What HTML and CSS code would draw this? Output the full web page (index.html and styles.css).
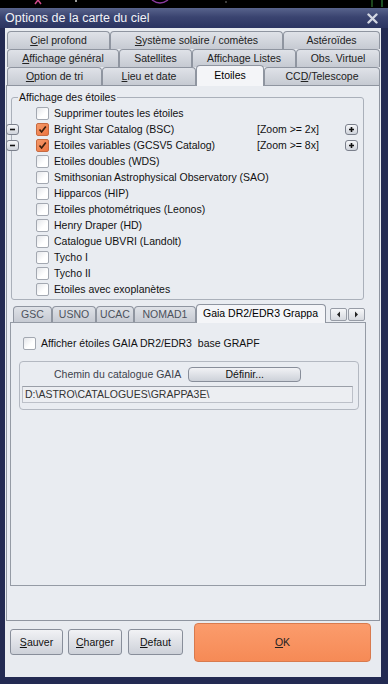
FILE: index.html
```html
<!DOCTYPE html>
<html>
<head>
<meta charset="utf-8">
<title>Options de la carte du ciel</title>
<link rel="stylesheet" href="styles.css">
</head>
<body>
<div class="stars">
  <svg width="388" height="8" viewBox="0 0 388 8">
    <path d="M35 4 L38 0 L41 4" stroke="#d04a8a" stroke-width="1.5" fill="none"/>
    <circle cx="76" cy="1" r="1" fill="#cfcfcf"/>
    <path d="M152 0 Q160 6 168 0" stroke="#8a3aa0" stroke-width="1.5" fill="none"/>
    <circle cx="226" cy="2" r="0.8" fill="#888"/>
    <path d="M372 0 L372 7" stroke="#3a8a3a" stroke-width="1"/>
    <path d="M382 0 L382 7" stroke="#3aa04a" stroke-width="1"/>
  </svg>
</div>
<div class="window">
  <div class="titlebar">
    <span class="title">Options de la carte du ciel</span>
    <svg class="close" width="11" height="11" viewBox="0 0 11 11">
      <path d="M1.5 1.5 L9.5 9.5 M9.5 1.5 L1.5 9.5" stroke="#d3d7e2" stroke-width="2.4" stroke-linecap="round"/>
    </svg>
  </div>
  <div class="frame">
    <div class="client">
      <div class="tabctl">
        <div class="tabrow r1">
          <div class="tab"><span><u>C</u>iel profond</span></div>
          <div class="tab"><span><u>S</u>ystème solaire / comètes</span></div>
          <div class="tab"><span>Astéroïdes</span></div>
        </div>
        <div class="tabrow r2">
          <div class="tab"><span><u>A</u>ffichage général</span></div>
          <div class="tab"><span>Satellites</span></div>
          <div class="tab"><span>Affichage Listes</span></div>
          <div class="tab"><span>Obs. Virtuel</span></div>
        </div>
        <div class="tabrow r3">
          <div class="tab"><span><u>O</u>ption de tri</span></div>
          <div class="tab"><span><u>L</u>ieu et date</span></div>
          <div class="tab active"><span>Etoiles</span></div>
          <div class="tab"><span>CC<u>D</u>/Telescope</span></div>
        </div>
        <div class="panel">
          <div class="group">
            <div class="legend">Affichage des étoiles</div>
            <div class="row"><span></span><span class="chk"></span><span class="lbl">Supprimer toutes les étoiles</span></div>
            <div class="row">
              <span class="mini"><svg width="11" height="9" viewBox="0 0 11 9"><path d="M3 4.5 H8" stroke="#111" stroke-width="1.6"/></svg></span>
              <span class="chk on"><svg width="11" height="11" viewBox="0 0 11 11"><path d="M2.5 5.5 L4.6 8 L8.8 2.6" stroke="#3a1e0c" stroke-width="1.7" fill="none"/></svg></span>
              <span class="lbl">Bright Star Catalog (BSC)</span>
              <span class="zoom">[Zoom &gt;= 2x]</span>
              <span class="mini"><svg width="11" height="9" viewBox="0 0 11 9"><path d="M3 4.5 H8 M5.5 2 V7" stroke="#111" stroke-width="1.6"/></svg></span>
            </div>
            <div class="row">
              <span class="mini"><svg width="11" height="9" viewBox="0 0 11 9"><path d="M3 4.5 H8" stroke="#111" stroke-width="1.6"/></svg></span>
              <span class="chk on"><svg width="11" height="11" viewBox="0 0 11 11"><path d="M2.5 5.5 L4.6 8 L8.8 2.6" stroke="#3a1e0c" stroke-width="1.7" fill="none"/></svg></span>
              <span class="lbl">Etoiles variables (GCSV5 Catalog)</span>
              <span class="zoom">[Zoom &gt;= 8x]</span>
              <span class="mini"><svg width="11" height="9" viewBox="0 0 11 9"><path d="M3 4.5 H8 M5.5 2 V7" stroke="#111" stroke-width="1.6"/></svg></span>
            </div>
            <div class="row"><span></span><span class="chk"></span><span class="lbl">Etoiles doubles (WDS)</span></div>
            <div class="row"><span></span><span class="chk"></span><span class="lbl wide">Smithsonian Astrophysical Observatory (SAO)</span></div>
            <div class="row"><span></span><span class="chk"></span><span class="lbl">Hipparcos (HIP)</span></div>
            <div class="row"><span></span><span class="chk"></span><span class="lbl">Etoiles photométriques (Leonos)</span></div>
            <div class="row"><span></span><span class="chk"></span><span class="lbl">Henry Draper (HD)</span></div>
            <div class="row"><span></span><span class="chk"></span><span class="lbl">Catalogue UBVRI (Landolt)</span></div>
            <div class="row"><span></span><span class="chk"></span><span class="lbl">Tycho I</span></div>
            <div class="row"><span></span><span class="chk"></span><span class="lbl">Tycho II</span></div>
            <div class="row"><span></span><span class="chk"></span><span class="lbl">Etoiles avec exoplanètes</span></div>
          </div>

          <div class="subctl">
            <div class="subrow">
              <div class="stab"><span>GSC</span></div>
              <div class="stab"><span>USNO</span></div>
              <div class="stab"><span>UCAC</span></div>
              <div class="stab"><span>NOMAD1</span></div>
              <div class="stab active"><span>Gaia DR2/EDR3 Grappa</span></div>
              <div class="arrows">
                <span class="arrow"><svg width="5" height="7" viewBox="0 0 5 7"><path d="M4 0.5 L1 3.5 L4 6.5 Z" fill="#222"/></svg></span>
                <span class="arrow"><svg width="5" height="7" viewBox="0 0 5 7"><path d="M1 0.5 L4 3.5 L1 6.5 Z" fill="#222"/></svg></span>
              </div>
            </div>
            <div class="subpanel">
              <div class="gaia-row">
                <span class="chk big"></span>
                <span>Afficher étoiles GAIA DR2/EDR3&nbsp; base GRAPF</span>
              </div>
              <div class="innergroup">
                <div class="path-head">
                  <span>Chemin du catalogue GAIA</span>
                  <span class="btn define">Définir...</span>
                </div>
                <div class="pathfield">D:\ASTRO\CATALOGUES\GRAPPA3E\</div>
              </div>
            </div>
          </div>
        </div>
      </div>

      <div class="bottom">
        <span class="btn b-save"><u>S</u>auver</span>
        <span class="btn b-load"><u>C</u>harger</span>
        <span class="btn b-def"><u>D</u>efaut</span>
        <span class="btn b-ok"><u>O</u>K</span>
      </div>
    </div>
  </div>
</div>
</body>
</html>
```

FILE: styles.css
```css
* { box-sizing: border-box; }
html, body { margin: 0; padding: 0; }
body {
  width: 388px;
  height: 684px;
  overflow: hidden;
  background: #000;
  font-family: "Liberation Sans", Arial, sans-serif;
  font-size: 10.5px;
  line-height: 13px;
  color: #111;
}
u { text-decoration: underline; text-underline-offset: 1px; }

.stars { height: 8px; background: #000; }
.stars svg { display: block; }

.window { height: 676px; display: flex; flex-direction: column; }

.titlebar {
  height: 20px;
  flex: none;
  display: flex;
  align-items: center;
  justify-content: space-between;
  padding: 0 10px 0 5px;
  background: linear-gradient(#58638c, #3a4470 45%, #2b3461);
  color: #f2f3f7;
  font-size: 12.5px;
}
.close { display: block; }

.frame {
  flex: 1;
  background: #232a52;
  padding: 0 7px 7px 5px;
  display: flex;
}
.client {
  flex: 1;
  background: #e8ebf0;
  padding: 3px 0 0 1px;
  display: flex;
  flex-direction: column;
}

/* main tabs */
.tabctl { display: flex; flex-direction: column; }
.tabrow {
  display: grid;
  height: 18px;
  grid-template-rows: 18px;
  margin-left: 1px;
  width: 373px;
}
.r1 { grid-template-columns: 103px 173px 97px; }
.r2 { grid-template-columns: 112px 73px 104px 84px; }
.r3 { grid-template-columns: 95px 94px 68px 116px; }

.tab, .stab {
  border: 1px solid #8f95a0;
  border-bottom: none;
  border-radius: 4px 4px 0 0;
  background: linear-gradient(#dfe2e8, #c6cad2);
  display: flex;
  align-items: center;
  justify-content: center;
  white-space: nowrap;
  overflow: hidden;
  color: #222;
}
.tab.active {
  height: 21px;
  margin-top: -2px;
  margin-bottom: -1px;
  background: #f4f5f8;
  z-index: 2;
  color: #000;
  padding-bottom: 2px;
}

.panel {
  width: 374px;
  height: 536px;
  border: 1px solid #8f95a0;
  background: #e9ecf1;
  padding: 11px 0 0 3px;
}

/* group box */
.group {
  margin-left: 1px;
  width: 353px;
  height: 203px;
  border: 1px solid #aab0ba;
  border-radius: 3px;
  padding: 0 5px 0 0;
}
.legend {
  width: max-content;
  margin: -7px 0 0 6px;
  padding: 0 1px;
  background: #e9ecf1;
  line-height: 13px;
}
.row {
  height: 16px;
  margin-left: -6px;
  display: grid;
  grid-template-columns: 30px 18px 1fr 88px 13px;
  align-items: center;
}
.row:first-of-type { margin-top: 1px; }
.legend + .row { margin-top: 1px; }
.lbl { white-space: nowrap; }
.zoom { white-space: nowrap; }

.mini {
  width: 13px;
  height: 11px;
  border: 1px solid #7b808c;
  border-radius: 3px;
  background: linear-gradient(#f6f7f9, #cfd3db);
  display: flex;
  align-items: center;
  justify-content: center;
}
.mini svg { display: block; }

.chk {
  width: 13px;
  height: 13px;
  border: 1px solid #a3a8b1;
  border-radius: 2px;
  background: linear-gradient(135deg, #e4e6ea, #ffffff 60%);
  display: flex;
  align-items: center;
  justify-content: center;
}
.chk.on {
  background: linear-gradient(135deg, #f59a6a, #ec7440);
  border-color: #c86a40;
}
.chk svg { display: block; }

/* sub tabs */
.subctl { margin-top: 6px; width: 356px; }
.subrow {
  display: grid;
  grid-template-columns: 39px 44px 38px 62px 130px auto;
  grid-template-rows: 16px;
  height: 16px;
  padding-left: 3px;
  color: #555b66;
}
.stab { color: #4c525c; }
.stab.active {
  height: 19px;
  margin-top: -2px;
  margin-bottom: -1px;
  background: #f4f5f8;
  z-index: 2;
  color: #000;
  justify-content: flex-start;
  padding: 0 0 2px 6px;
}
.arrows {
  display: flex;
  gap: 1px;
  margin-left: 4px;
  align-self: center;
}
.arrow {
  width: 17px;
  height: 13px;
  border: 1px solid #979ca6;
  border-radius: 2px;
  background: linear-gradient(#f6f7f9, #d6d9df);
  display: flex;
  align-items: center;
  justify-content: center;
}
.arrow svg { display: block; }

.subpanel {
  height: 264px;
  border: 1px solid #959ba5;
  background: #e9ecf1;
  padding: 14px 0 0 12px;
}
.gaia-row {
  display: flex;
  align-items: center;
  gap: 5px;
  height: 13px;
  white-space: nowrap;
}
.chk.big { width: 13px; height: 13px; }

.innergroup {
  margin: 11px 0 0 -4px;
  width: 340px;
  height: 49px;
  border: 1px solid #b3b8c1;
  border-radius: 4px;
  padding: 5px 0 0 2px;
}
.path-head {
  display: flex;
  align-items: center;
  padding-left: 32px;
  height: 15px;
  color: #3c424c;
}
.btn {
  display: flex;
  align-items: center;
  justify-content: center;
  border: 1px solid #888e9a;
  border-radius: 3px;
  background: linear-gradient(#f1f2f5, #cdd1d9);
  color: #111;
  white-space: nowrap;
}
.define {
  margin-left: 7px;
  width: 113px;
  height: 15px;
  border-radius: 4px;
}
.pathfield {
  margin-top: 4px;
  width: 331px;
  height: 17px;
  border: 1px solid #bcc0c8;
  border-top-color: #9a9fa8;
  background: #eceef2;
  padding: 1px 0 0 2px;
  color: #333;
  white-space: nowrap;
}

/* bottom buttons */
.bottom {
  flex: 1;
  display: flex;
  align-items: center;
  padding: 0 0 14px 4px;
}
.b-save { width: 53px; height: 26px; margin-right: 5px; }
.b-load { width: 54px; height: 26px; margin-right: 6px; }
.b-def { width: 55px; height: 26px; margin-right: 11px; }
.b-ok {
  width: 177px;
  height: 39px;
  border-color: #d87a4e;
  border-radius: 4px;
  background: linear-gradient(#fb9c6c, #f68a56);
  color: #222;
}
```
